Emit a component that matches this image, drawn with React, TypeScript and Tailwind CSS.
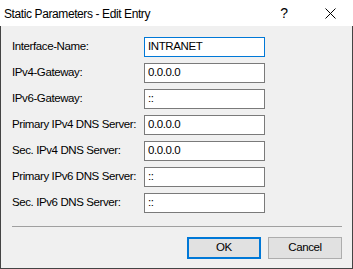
const rows: { label: string; value: string; focused?: boolean }[] = [
  { label: "Interface-Name:", value: "INTRANET", focused: true },
  { label: "IPv4-Gateway:", value: "0.0.0.0" },
  { label: "IPv6-Gateway:", value: "::" },
  { label: "Primary IPv4 DNS Server:", value: "0.0.0.0" },
  { label: "Sec. IPv4 DNS Server:", value: "0.0.0.0" },
  { label: "Primary IPv6 DNS Server:", value: "::" },
  { label: "Sec. IPv6 DNS Server:", value: "::" },
];

export default function App() {
  return (
    <div className="w-[353px] h-[269px] flex flex-col bg-white text-[11.5px] text-black font-['Liberation_Sans',Arial,sans-serif] tracking-[-0.4px]">
      {/* title bar */}
      <div className="h-[26px] flex items-center bg-white">
        <div className="pl-[4px] flex-1 pt-[1px] whitespace-nowrap text-[12px]">Static Parameters - Edit Entry</div>
        <div className="w-[46px] text-center text-[14px] pt-[1px]">?</div>
        <div className="w-[46px] flex items-center justify-center">
          <svg width="11" height="11" viewBox="0 0 11 11">
            <path d="M0.5 0.5 L10.5 10.5 M10.5 0.5 L0.5 10.5" stroke="#000" strokeWidth="1" />
          </svg>
        </div>
      </div>

      {/* body */}
      <div className="flex-1 flex flex-col bg-[#f0f0f0] border-x border-b border-[#444] pt-[11px] pl-[11px] pr-[10px]">
        <div className="flex flex-col gap-[6px]">
          {rows.map((r) => (
            <div key={r.label} className="flex items-center h-[20px]">
              <div className="w-[132px] shrink-0 whitespace-nowrap">{r.label}</div>
              <div
                className={
                  r.focused
                    ? "w-[121px] h-[20px] shrink-0 bg-white border border-[#0078d7] flex items-center pl-[3px]"
                    : "w-[121px] h-[20px] shrink-0 bg-white border border-[#7a7a7a] flex items-center pl-[3px]"
                }
              >
                {r.value}
              </div>
            </div>
          ))}
        </div>

        <div className="mt-[13px] h-px w-[330px] bg-[#a0a0a0]" />

        <div className="mt-[10px] flex justify-end gap-[7px] w-[330px]">
          <button className="w-[74px] h-[22px] bg-[#e1e1e1] border-2 border-[#0078d7]">OK</button>
          <button className="w-[74px] h-[22px] bg-[#e1e1e1] border border-[#adadad]">Cancel</button>
        </div>
      </div>
    </div>
  );
}
